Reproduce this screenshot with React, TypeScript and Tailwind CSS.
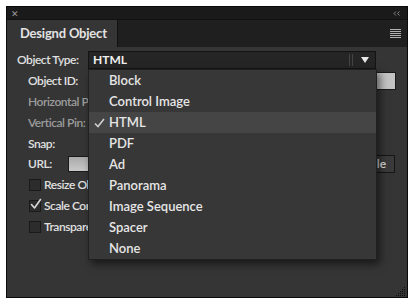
import React from "react";

const font = { fontFamily: "Lato, 'Liberation Sans', sans-serif" };

function Check({ className = "" }: { className?: string }) {
  return (
    <svg className={className} width="12" height="12" viewBox="0 0 12 12" fill="none">
      <path d="M1.5 6.5 L4.5 10 L10.5 1.5" stroke="#d8d8d8" strokeWidth="1.6" strokeLinecap="round" strokeLinejoin="round" />
    </svg>
  );
}

function Grip() {
  const dots: [number, number][] = [];
  for (let r = 0; r < 5; r++) {
    for (let c = 0; c < 5; c++) {
      if (c >= 4 - r) dots.push([c * 2, r * 2]);
    }
  }
  return (
    <svg width="10" height="10" viewBox="0 0 10 10">
      {dots.map(([x, y], i) => (
        <rect key={i} x={x} y={y} width="1" height="1" fill="#0d0d0d" />
      ))}
    </svg>
  );
}

const items = ["Block", "Control Image", "HTML", "PDF", "Ad", "Panorama", "Image Sequence", "Spacer", "None"];

export default function App() {
  return (
    <div className="w-[414px] h-[306px] bg-white p-[6px] pb-[8px] pr-[6px]" style={font}>
      <div className="w-[402px] h-[292px] border border-[#0a0a0a] bg-[#353535] flex flex-col">
        {/* title bar */}
        <div className="h-[12px] bg-[#1a1a1a] flex items-center justify-between pl-[4px] pr-[7px]">
          <span className="text-[9px] leading-none text-[#9a9a9a]">✕</span>
          <svg width="7" height="5" viewBox="0 0 7 5" fill="none">
            <path d="M3 0.5 L1 2.5 L3 4.5 M6.5 0.5 L4.5 2.5 L6.5 4.5" stroke="#8a8a8a" strokeWidth="1" />
          </svg>
        </div>
        {/* tab row */}
        <div className="h-[28px] bg-[#1f1f1f] border-t border-[#111] flex items-stretch justify-between">
          <div className="w-[111px] bg-[#353535] border-r border-[#111] flex items-center pl-[13px] text-[13px] font-bold tracking-[-0.2px] text-[#e2e2e2]">
            Designd Object
          </div>
          <div className="flex flex-col justify-center gap-[1px] pr-[6px]">
            {[0, 1, 2, 3, 4].map((i) => (
              <div key={i} className="w-[11px] h-[1px] bg-[#b0b0b0]" />
            ))}
          </div>
        </div>
        {/* content */}
        <div className="relative flex-1 flex flex-col pt-[2px] text-[12px] font-semibold tracking-[-0.45px] text-[#e0e0e0]">
          <div className="h-[21px] flex items-center pl-[10px]">
            <span className="w-[71px] whitespace-nowrap">Object Type:</span>
            <div className="w-[288px] h-[18px] bg-[#252525] border border-[#141414] flex items-center pl-[4px] text-[12px] font-bold tracking-normal text-[#f0f0f0]">
              <span className="flex-1">HTML</span>
              <div className="flex h-[12px] gap-[2px] mr-[8px]">
                <div className="w-[1px] bg-[#444]" />
                <div className="w-[1px] bg-[#444]" />
              </div>
              <svg width="8" height="6" viewBox="0 0 8 6" className="mr-[6px]">
                <path d="M0 0 H8 L4 6 Z" fill="#e8e8e8" />
              </svg>
            </div>
          </div>
          <div className="h-[21px] flex items-center pl-[21px]">
            <span className="w-[60px] whitespace-nowrap overflow-hidden">Object ID:</span>
            <div className="w-[308px] h-[18px] bg-[#c3c3c3] border border-[#1a1a1a]" />
          </div>
          <div className="h-[21px] flex items-center pl-[21px] text-[#9c9c9c]">
            <span className="w-[60px] whitespace-nowrap overflow-hidden">Horizontal Pin:</span>
          </div>
          <div className="h-[21px] flex items-center pl-[21px] text-[#9c9c9c]">
            <span className="w-[60px] whitespace-nowrap overflow-hidden">Vertical Pin:</span>
          </div>
          <div className="h-[21px] flex items-center pl-[21px]">Snap:</div>
          <div className="h-[20px] flex items-center pl-[21px] pr-[12px]">
            <span className="w-[40px]">URL:</span>
            <div className="w-[230px] h-[16px] bg-gradient-to-b from-[#a9a9a9] to-[#c9c9c9] border border-[#1a1a1a]" />
            <div className="ml-auto w-[80px] h-[18px] bg-[#3a3a3a] border border-[#151515] flex items-center justify-end pr-[8px] text-[12px] tracking-normal whitespace-nowrap">
              Choose File
            </div>
          </div>
          {["Resize Object", "Scale Content", "Transparent"].map((t, i) => (
            <div key={t} className="h-[21px] flex items-center pl-[22px] gap-[3px]">
              <div className="relative w-[12px] h-[12px] bg-[#2c2c2c] border border-[#1a1a1a]">
                {i === 1 && <Check className="absolute left-[0px] top-[-3px]" />}
              </div>
              <span className="w-[44px] whitespace-nowrap overflow-hidden">{t}</span>
            </div>
          ))}
          <div className="flex-1 flex items-end justify-end pr-[1px] pb-[0px]">
            <Grip />
          </div>

          {/* dropdown menu */}
          <div className="absolute left-[81px] top-[22px] w-[289px] bg-[#373737] border border-[#202020] shadow-[3px_4px_8px_rgba(0,0,0,0.55)] text-[13px] font-semibold tracking-normal text-[#e6e6e6]">
            {items.map((it) => (
              <div
                key={it}
                className={`h-[21px] flex items-center pl-[20px] relative ${it === "HTML" ? "bg-[#454545]" : ""}`}
              >
                {it === "HTML" && (
                  <svg width="11" height="10" viewBox="0 0 11 10" className="absolute left-[5px] top-[6px]">
                    <path d="M1 5.5 L4 8.5 L10 1" stroke="#cfcfcf" strokeWidth="1.6" fill="none" />
                  </svg>
                )}
                {it}
              </div>
            ))}
          </div>
        </div>
      </div>
    </div>
  );
}
